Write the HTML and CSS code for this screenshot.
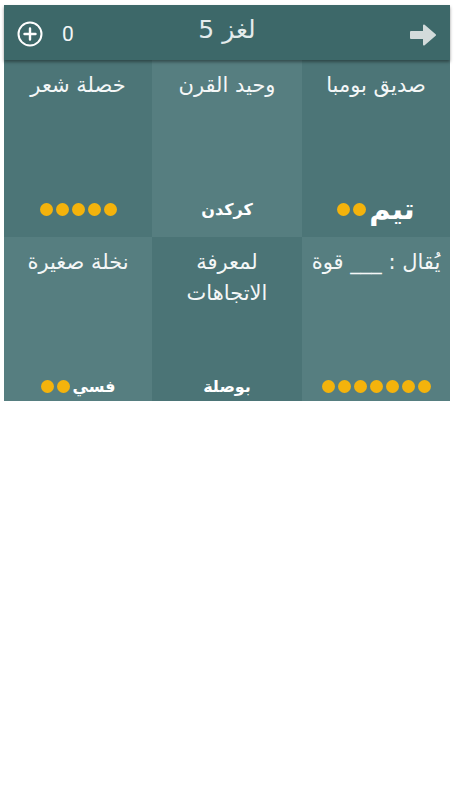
FILE: index.html
```html
<!DOCTYPE html>
<html lang="ar">
<head>
    <meta charset="UTF-8">
    <meta name="viewport" content="width=device-width, initial-scale=1.0">
    <title>لغز 5</title>
    <link rel="stylesheet" href="styles.css">
</head>
<body>

    <div class="app">
        <div class="header">
            <div class="coins">
                <svg class="plus" width="26" height="26" viewBox="0 0 26 26">
                    <circle cx="13" cy="13" r="11.5" fill="none" stroke="#fff" stroke-width="2"/>
                    <path d="M13 7.5v11M7.5 13h11" stroke="#fff" stroke-width="2.4" stroke-linecap="round"/>
                </svg>
                <span class="count">0</span>
            </div>
            <h1 class="title">لغز 5</h1>
            <div class="next">
                <svg width="28" height="26" viewBox="0 0 28 26">
                    <path d="M2 10h13V3.5L26 13 15 22.5V16H2z" fill="#d3dbdb" stroke="#d3dbdb" stroke-width="2" stroke-linejoin="round"/>
                </svg>
            </div>
        </div>

        <div class="board">
            <div class="tile dark">
                <p class="clue">صديق بومبا</p>
                <div class="answer"><span class="big">تيم</span><i></i><i></i></div>
            </div>
            <div class="tile light">
                <p class="clue">وحيد القرن</p>
                <div class="answer"><span>كركدن</span></div>
            </div>
            <div class="tile dark">
                <p class="clue">خصلة شعر</p>
                <div class="answer"><i></i><i></i><i></i><i></i><i></i></div>
            </div>
            <div class="tile light">
                <p class="clue">يُقال : ___ قوة</p>
                <div class="answer"><i></i><i></i><i></i><i></i><i></i><i></i><i></i></div>
            </div>
            <div class="tile dark">
                <p class="clue">لمعرفة الاتجاهات</p>
                <div class="answer"><span>بوصلة</span></div>
            </div>
            <div class="tile light">
                <p class="clue">نخلة صغيرة</p>
                <div class="answer"><span>فسي</span><i></i><i></i></div>
            </div>
        </div>
    </div>

</body>
</html>
```

FILE: styles.css
```css
body {
    margin: 0;
    background: #ffffff;
    font-family: 'DejaVu Sans', 'Noto Sans', sans-serif;
    color: #ffffff;
}

.app {
    margin: 5px 4px 0;
}

.header {
    position: relative;
    z-index: 1;
    height: 55px;
    background: #3d6869;
    display: flex;
    align-items: center;
    justify-content: space-between;
    padding: 0 13px 0 13px;
    box-shadow: 0 2px 3px rgba(0, 0, 0, 0.4);
}

.coins {
    display: flex;
    align-items: center;
    gap: 19px;
    width: 80px;
    padding-top: 2px;
}

.count {
    font-family: 'Roboto', sans-serif;
    font-size: 21px;
    color: #f2f6f6;
}

.title {
    margin: 0;
    font-size: 25px;
    font-weight: normal;
    color: #e4ecec;
    padding-bottom: 6px;
}

.next {
    width: 80px;
    display: flex;
    justify-content: flex-end;
    padding-top: 4px;
}

.board {
    direction: rtl;
    display: grid;
    grid-template-columns: 148px 150px 148px;
    grid-template-rows: 177px 177px;
    height: 341px;
    overflow: hidden;
}

.tile {
    display: flex;
    flex-direction: column;
    justify-content: space-between;
    align-items: center;
    padding: 10px 6px 16px;
    text-align: center;
}

.dark {
    background: #4c7577;
}

.light {
    background: #567e80;
}

/* checkerboard: second row flips */
.board .tile:nth-child(4) { background: #567e80; }
.board .tile:nth-child(5) { background: #4b7476; }
.board .tile:nth-child(6) { background: #567e80; }

.clue {
    margin: 0;
    font-size: 21px;
    line-height: 31px;
    color: #f4f7f7;
}

.answer {
    display: flex;
    align-items: center;
    gap: 3px;
    height: 24px;
}

.answer span {
    font-size: 16px;
    font-weight: bold;
    color: #ffffff;
}

.answer span.big {
    font-size: 29px;
}

.answer i {
    display: block;
    width: 13px;
    height: 13px;
    border-radius: 50%;
    background: #f4b30c;
}
```
